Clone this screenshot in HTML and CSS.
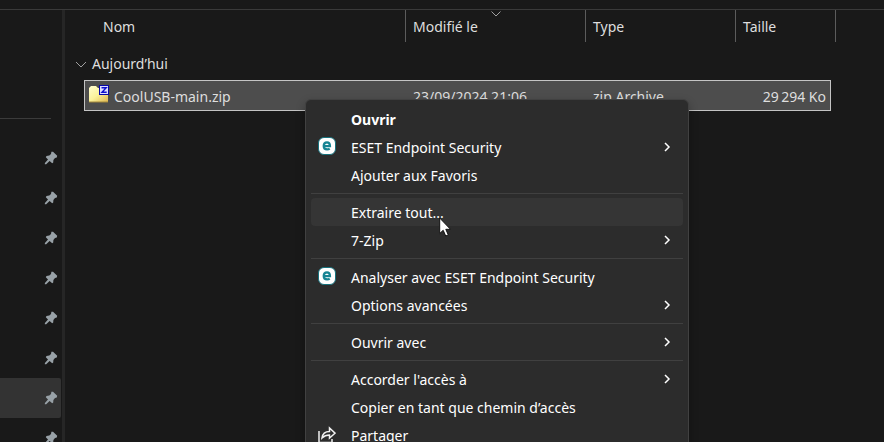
FILE: index.html
```html
<!DOCTYPE html>
<html lang="fr">
<head>
<meta charset="utf-8">
<meta name="viewport" content="width=device-width, initial-scale=1">
<title>Explorateur</title>
<link rel="stylesheet" href="styles.css">
</head>
<body>
<svg class="defs" aria-hidden="true">
  <symbol id="pin" viewBox="0 0 14 14"><path d="M7.4.8 9 .7 13.2 4.7 12.8 6.4 11 7 9.4 9 9.2 11.6 8.2 12.2 5.6 9.9 2.2 13.2.8 13.2.9 12 4 8.5 1.8 6.2 2.5 5 5.3 4.6 7 3Z"/></symbol>
  <symbol id="arrow" viewBox="0 0 8 10"><path d="M2 1 6 5 2 9" fill="none" stroke="currentColor" stroke-width="1.5"/></symbol>
  <symbol id="eset" viewBox="0 0 18 18"><rect x=".5" y=".5" width="17" height="17" rx="5.5" fill="#fff" stroke="#16717c"/><path d="M5.9 9.2H12C12 6.7 10.9 5.4 9 5.4S5.7 6.8 5.7 9 6.9 12.4 9.1 12.4C10.2 12.4 11.1 12.1 11.7 11.6" fill="none" stroke="#178493" stroke-width="2.2"/></symbol>
</svg>
<div class="toolbar"></div>
<div class="explorer">
  <nav class="sidebar" aria-label="Accès rapide">
    <hr>
    <button class="place" aria-label="Épinglé 1"><svg><use href="#pin"/></svg></button>
    <button class="place" aria-label="Épinglé 2"><svg><use href="#pin"/></svg></button>
    <button class="place" aria-label="Épinglé 3"><svg><use href="#pin"/></svg></button>
    <button class="place" aria-label="Épinglé 4"><svg><use href="#pin"/></svg></button>
    <button class="place" aria-label="Épinglé 5"><svg><use href="#pin"/></svg></button>
    <button class="place" aria-label="Épinglé 6"><svg><use href="#pin"/></svg></button>
    <button class="place current" aria-label="Épinglé 7"><svg><use href="#pin"/></svg></button>
    <button class="place" aria-label="Épinglé 8"><svg><use href="#pin"/></svg></button>
  </nav>
  <main class="content">
    <table class="files">
      <colgroup><col class="c-edge"><col class="c-name"><col class="c-date"><col class="c-type"><col class="c-size"><col class="c-end"></colgroup>
      <thead>
        <tr>
          <td></td>
          <th class="name-head"><button>Nom</button></th>
          <th><button>Modifié le</button><svg class="sort" viewBox="0 0 10 6"><path d="M.5.5 5 5 9.5.5"/></svg></th>
          <th><button>Type</button></th>
          <th colspan="2"><button>Taille</button></th>
        </tr>
      </thead>
      <tbody>
        <tr>
          <th class="group" colspan="6"><button><svg viewBox="0 0 12 7"><path d="M1 1 6 6 11 1"/></svg>Aujourd’hui</button></th>
        </tr>
        <tr class="file">
          <td></td>
          <td class="first"><div class="name"><svg viewBox="0 0 20 18"><defs><linearGradient id="g" x2="1" y2="1"><stop offset="0" stop-color="#fffdd0"/><stop offset=".5" stop-color="#fbf29a"/><stop offset="1" stop-color="#dfb64f"/></linearGradient></defs><path d="M0 17V3L2 1H7L9 3H19V17Z" fill="url(#g)"/><path d="M0 17H19" stroke="#a58a3c"/><rect x="10.5" y=".5" width="9" height="9" fill="#dedeff" stroke="#0808a8"/><path d="M12.5 2.8H17.2L13 7.2H17.7" fill="none" stroke="#1010d0" stroke-width="1.4"/></svg>CoolUSB-main.zip</div></td>
          <td>23/09/2024 21:06</td>
          <td>zip Archive</td>
          <td class="size">29&#8239;294 Ko</td>
          <td></td>
        </tr>
      </tbody>
    </table>
  </main>
</div>
<div class="menu" role="menu">
  <button class="default" role="menuitem"><span>Ouvrir</span></button>
  <button role="menuitem"><svg class="icon"><use href="#eset"/></svg><span>ESET Endpoint Security</span><svg class="more"><use href="#arrow"/></svg></button>
  <button role="menuitem"><span>Ajouter aux Favoris</span></button>
  <hr>
  <button class="hover" role="menuitem"><span>Extraire tout...</span></button>
  <button role="menuitem"><span>7-Zip</span><svg class="more"><use href="#arrow"/></svg></button>
  <hr>
  <button role="menuitem"><svg class="icon"><use href="#eset"/></svg><span>Analyser avec ESET Endpoint Security</span></button>
  <button role="menuitem"><span>Options avancées</span><svg class="more"><use href="#arrow"/></svg></button>
  <hr>
  <button role="menuitem"><span>Ouvrir avec</span><svg class="more"><use href="#arrow"/></svg></button>
  <hr>
  <button role="menuitem"><span>Accorder l'accès à</span><svg class="more"><use href="#arrow"/></svg></button>
  <button role="menuitem"><span>Copier en tant que chemin d’accès</span></button>
  <button role="menuitem"><svg class="icon share" viewBox="0 0 18 18"><path d="M1 5V16.5H14V13M4 12C4.5 8 7 5.5 11.5 5.5V2L17 7.2 11.5 12V9C8 9 6 10 4 12Z"/></svg><span>Partager</span></button>
</div>
<svg class="cursor" viewBox="0 0 12 20" aria-hidden="true"><path d="M.7 1V16.5L4.2 13.3 6.7 19 9.3 17.9 6.8 12.3H11.5Z"/></svg>
</body>
</html>
```

FILE: styles.css
```css
* { box-sizing: border-box; }

body {
  margin: 0;
  height: 100vh;
  display: flex;
  flex-direction: column;
  overflow: hidden;
  position: relative;
  background: #191919;
  color: #dedede;
  font: 14px/20px "Noto Sans", "Open Sans", sans-serif;
}

.defs { position: absolute; width: 0; height: 0; }

button {
  border: 0;
  padding: 0;
  background: none;
  color: inherit;
  font: inherit;
  text-align: left;
}

.toolbar { height: 10px; flex: none; border-bottom: 1px solid #3a3a3a; }

.explorer { flex: 1; min-height: 0; display: flex; }

.sidebar {
  width: 65px;
  flex: none;
  overflow: hidden;
  border-right: 3px solid #262626;
}

.sidebar hr {
  border: 0;
  height: 1px;
  background: #3b3b3b;
  margin: 108px 11px 19px 0;
}

.place {
  display: flex;
  align-items: center;
  justify-content: flex-end;
  width: 61px;
  height: 40px;
  padding-right: 3px;
}

.place.current { background: #333; border-radius: 0 2px 2px 0; }
.place svg { width: 14px; height: 14px; fill: #98a1a7; }

.content { flex: 1; min-width: 0; }

.files { table-layout: fixed; width: 771px; border-collapse: separate; border-spacing: 0; }
.c-edge { width: 19px; }
.c-name { width: 322px; }
.c-date { width: 180px; }
.c-type { width: 150px; }
.c-size { width: 95px; }
.c-end { width: 5px; }

.files th, .files td { padding: 2px 7px 0; font-weight: 400; text-align: left; white-space: nowrap; }
.files thead th { position: relative; height: 32px; border-right: 1px solid #5c5c5c; }
.files thead .name-head { padding-left: 19px; }

.sort {
  position: absolute;
  top: 1px;
  left: 50%;
  width: 10px;
  height: 6px;
  margin-left: -5px;
}

.sort path, .group path { fill: none; stroke: #a0a0a0; }

.files .group { height: 38px; padding: 6px 10px 0; }
.group button { display: flex; align-items: center; gap: 5px; }
.group svg { width: 12px; height: 7px; }

.file td { height: 31px; }
.file td:not(:first-child):not(:last-child) {
  background: #4d4d4d;
  border: 0 solid #c4c4c4;
  border-width: 1px 0;
}
.file td.first:not(:first-child):not(:last-child) { border-left-width: 1px; padding-left: 4px; }
.file td.size:not(:first-child):not(:last-child) { border-right-width: 1px; padding-right: 4px; text-align: right; }
.name { display: flex; align-items: center; gap: 5px; }
.name svg { width: 20px; height: 18px; margin-bottom: 6px; }

.menu {
  position: absolute;
  top: 99px;
  left: 305px;
  width: 384px;
  padding: 5px;
  background: #2c2c2c;
  border: 1px solid #414141;
  border-radius: 6px;
  box-shadow: 0 4px 10px rgba(0, 0, 0, .3);
  color: #fff;
}

.menu button {
  display: grid;
  grid-template-columns: 40px 1fr 20px;
  align-items: center;
  width: 100%;
  height: 28px;
  padding-top: 2px;
  border-radius: 4px;
}

.menu .hover { background: #353535; }
.menu .default { font-weight: 700; }
.menu span { grid-column: 2; grid-row: 1; }
.menu .icon { grid-column: 1; grid-row: 1; width: 18px; height: 18px; margin: 0 0 4px 7px; }
.menu .share { fill: none; stroke: #f0f0f0; stroke-width: 1.5; margin-bottom: 2px; }
.menu .more { grid-column: 3; grid-row: 1; width: 8px; height: 10px; margin-bottom: 3px; }
.menu hr { border: 0; height: 1px; margin: 4px 0; background: #404040; }

.cursor { position: absolute; top: 217px; left: 439px; width: 12px; height: 20px; }
.cursor path { fill: #fff; stroke: #111; }
```
